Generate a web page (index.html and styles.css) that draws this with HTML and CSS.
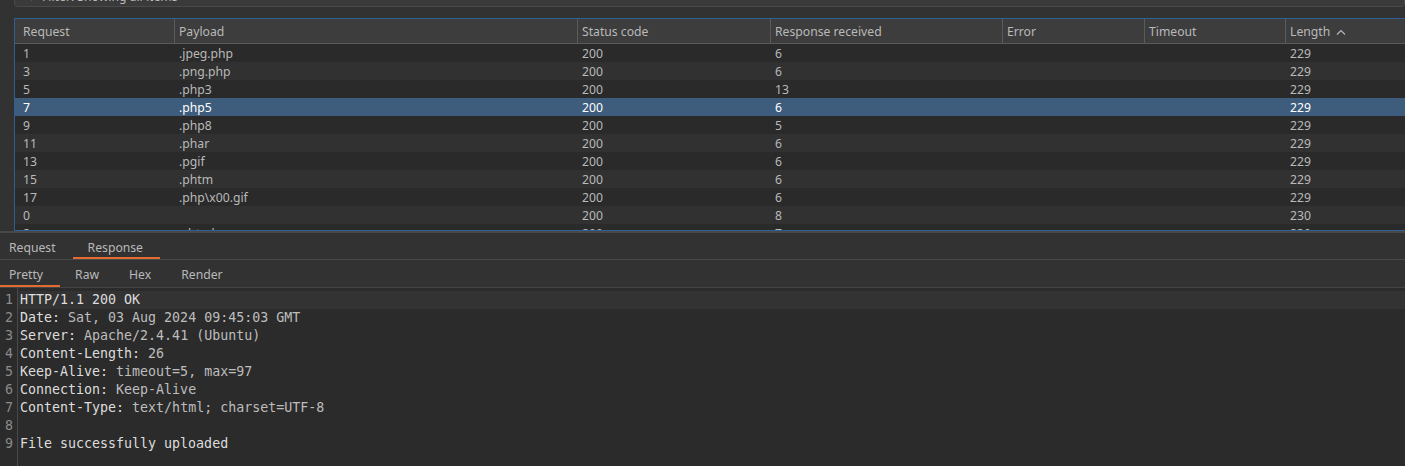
FILE: index.html
```html
<!DOCTYPE html>
<html>
<head>
<meta charset="utf-8">
<link rel="stylesheet" href="styles.css">
</head>
<body>
<div class="app">
  <div class="filter-row">
    <div class="filter-bar">
      <svg class="filter-icon" width="10" height="10" viewBox="0 0 10 10"><path d="M1 1h8L6 5v4L4 8V5z" fill="none" stroke="#aaa" stroke-width="1"/></svg>
      <span>Filter: Showing all items</span>
    </div>
  </div>
  <div class="table-wrap">
    <div class="table">
      <div class="row head">
        <div class="c c1">Request</div>
        <div class="c c2">Payload</div>
        <div class="c c3">Status code</div>
        <div class="c c4">Response received</div>
        <div class="c c5">Error</div>
        <div class="c c6">Timeout</div>
        <div class="c c7">Length <svg class="sort" width="10" height="6" viewBox="0 0 10 6"><path d="M1 5.5L5 1.5L9 5.5" fill="none" stroke="#b9b9b9" stroke-width="1.1"/></svg></div>
      </div>
      <div class="row odd"><div class="c c1">1</div><div class="c c2">.jpeg.php</div><div class="c c3">200</div><div class="c c4">6</div><div class="c c5"></div><div class="c c6"></div><div class="c c7">229</div></div>
      <div class="row even"><div class="c c1">3</div><div class="c c2">.png.php</div><div class="c c3">200</div><div class="c c4">6</div><div class="c c5"></div><div class="c c6"></div><div class="c c7">229</div></div>
      <div class="row odd"><div class="c c1">5</div><div class="c c2">.php3</div><div class="c c3">200</div><div class="c c4">13</div><div class="c c5"></div><div class="c c6"></div><div class="c c7">229</div></div>
      <div class="row sel"><div class="c c1">7</div><div class="c c2">.php5</div><div class="c c3">200</div><div class="c c4">6</div><div class="c c5"></div><div class="c c6"></div><div class="c c7">229</div></div>
      <div class="row odd"><div class="c c1">9</div><div class="c c2">.php8</div><div class="c c3">200</div><div class="c c4">5</div><div class="c c5"></div><div class="c c6"></div><div class="c c7">229</div></div>
      <div class="row even"><div class="c c1">11</div><div class="c c2">.phar</div><div class="c c3">200</div><div class="c c4">6</div><div class="c c5"></div><div class="c c6"></div><div class="c c7">229</div></div>
      <div class="row odd"><div class="c c1">13</div><div class="c c2">.pgif</div><div class="c c3">200</div><div class="c c4">6</div><div class="c c5"></div><div class="c c6"></div><div class="c c7">229</div></div>
      <div class="row even"><div class="c c1">15</div><div class="c c2">.phtm</div><div class="c c3">200</div><div class="c c4">6</div><div class="c c5"></div><div class="c c6"></div><div class="c c7">229</div></div>
      <div class="row odd"><div class="c c1">17</div><div class="c c2">.php\x00.gif</div><div class="c c3">200</div><div class="c c4">6</div><div class="c c5"></div><div class="c c6"></div><div class="c c7">229</div></div>
      <div class="row even"><div class="c c1">0</div><div class="c c2"></div><div class="c c3">200</div><div class="c c4">8</div><div class="c c5"></div><div class="c c6"></div><div class="c c7">230</div></div>
      <div class="row odd"><div class="c c1">2</div><div class="c c2">.shtml</div><div class="c c3">200</div><div class="c c4">7</div><div class="c c5"></div><div class="c c6"></div><div class="c c7">230</div></div>
    </div>
  </div>
  <div class="tabs main-tabs">
    <div class="tab">Request</div>
    <div class="tab active">Response</div>
  </div>
  <div class="tabs sub-tabs">
    <div class="tab active">Pretty</div>
    <div class="tab">Raw</div>
    <div class="tab">Hex</div>
    <div class="tab">Render</div>
  </div>
  <div class="editor">
    <div class="gutter">
      <div>1</div><div>2</div><div>3</div><div>4</div><div>5</div><div>6</div><div>7</div><div>8</div><div>9</div>
    </div>
    <div class="code">
      <div class="line cur">HTTP/1.1 200 OK</div>
      <div class="line"><span class="k">Date:</span> <span class="v">Sat, 03 Aug 2024 09:45:03 GMT</span></div>
      <div class="line"><span class="k">Server:</span> <span class="v">Apache/2.4.41 (Ubuntu)</span></div>
      <div class="line"><span class="k">Content-Length:</span> <span class="v">26</span></div>
      <div class="line"><span class="k">Keep-Alive:</span> <span class="v">timeout=5, max=97</span></div>
      <div class="line"><span class="k">Connection:</span> <span class="v">Keep-Alive</span></div>
      <div class="line"><span class="k">Content-Type:</span> <span class="v">text/html; charset=UTF-8</span></div>
      <div class="line"></div>
      <div class="line">File successfully uploaded</div>
    </div>
  </div>
</div>
</body>
</html>
```

FILE: styles.css
```css
* { box-sizing: border-box; }
html, body { margin: 0; padding: 0; }
body {
  width: 1405px;
  height: 466px;
  overflow: hidden;
  background: #323232;
  font-family: "Noto Sans", "DejaVu Sans", sans-serif;
  font-size: 12.2px;
  color: #b9b9b9;
}
.app { display: flex; flex-direction: column; height: 466px; }

.filter-row { height: 18px; padding-left: 14px; }
.filter-bar {
  margin-top: -15px;
  height: 22px;
  background: #3a3a3a;
  border: 1px solid #4a4a4a;
  border-radius: 4px;
  display: flex;
  align-items: center;
  gap: 6px;
  padding-left: 11px;
  color: #b9b9b9;
}
.filter-icon { flex: none; }

.table-wrap {
  margin-left: 14px;
  height: 213px;
  border-top: 1px solid #2f5f95;
  border-left: 1px solid #2f5f95;
  border-bottom: 1px solid #2f5f95;
  overflow: hidden;
}
.row { display: flex; height: 18px; align-items: center; white-space: nowrap; }
.row.head {
  height: 25px;
  background: #3d3d3d;
  border-bottom: 1px solid #5a5a5a;
}
.row.head .c { height: 24px; line-height: 24px; padding-top: 1px; border-right: 1px solid #5a5a5a; }
.row.odd { background: #2a2a2a; }
.row.even { background: #313131; }
.row.sel { background: #3e5c7c; color: #ffffff; }
.c { padding-left: 4px; overflow: hidden; flex: none; }
.c1 { width: 160px; padding-left: 8px; }
.c2 { width: 403px; }
.c3 { width: 193px; }
.c4 { width: 232px; }
.c5 { width: 142px; }
.c6 { width: 141px; }
.c7 { flex: 1; }
.row.head .c7 { border-right: none; }
.sort { margin-left: 3px; vertical-align: 1px; }

.tabs {
  display: flex;
  border-top: 2px solid #484848;
  background: #323232;
}
.main-tabs { height: 28px; }
.sub-tabs { height: 28px; border-top: 1px solid #484848; }
.tab {
  display: flex;
  align-items: center;
  border-bottom: 2px solid transparent;
}
.main-tabs .tab { padding: 4px 17px 0 9px; }
.main-tabs .tab.active { padding: 4px 17px 0 15px; border-bottom-color: #e36a30; }
.sub-tabs .tab { padding: 4px 15px 0 15px; }
.sub-tabs .tab:first-child { padding: 4px 17px 0 9px; }
.sub-tabs .tab.active { border-bottom-color: #e36a30; }

.editor {
  flex: 1;
  display: flex;
  background: #2b2b2b;
  border-top: 1px solid #454545;
  padding-top: 3px;
  font-family: "DejaVu Sans Mono", monospace;
  font-size: 13.3px;
}
.gutter {
  width: 18px;
  margin-top: -3px;
  padding-top: 3px;
  border-right: 1px solid #4a4a4a;
  color: #8c8c8c;
  text-align: right;
  padding-right: 4px;
}
.gutter div, .line { height: 18px; line-height: 18px; }
.code { flex: 1; }
.line { padding-left: 2px; color: #dddddd; white-space: pre; }
.line.cur { background: #333333; }
.k { color: #dddddd; }
.v { color: #bdbdbd; }
```
